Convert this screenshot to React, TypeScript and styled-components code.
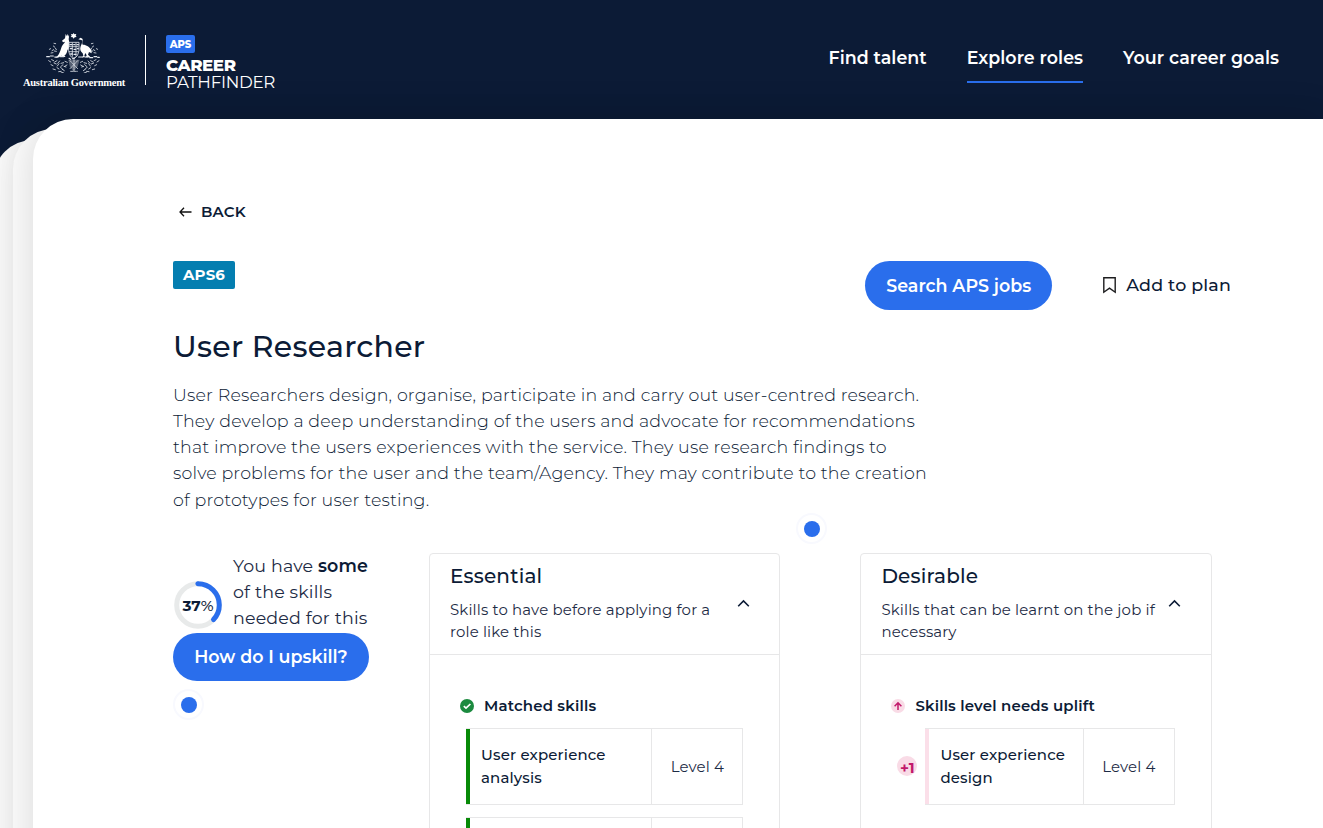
import React from "react";
import styled, { createGlobalStyle, css } from "styled-components";

const navy = "#0c1b36";
const blue = "#2a6eec";
const line = "#e7e7e8";
const body = "17.45px";
const small = "14.95px";

const GlobalStyle = createGlobalStyle`
  * { box-sizing: border-box; }
  html, body { margin: 0; height: 828px; overflow: hidden; background: ${navy}; }
  body { font-family: Montserrat, Inter, sans-serif; color: ${navy}; }
  h1, h2, p { margin: 0; }
  button { font-family: inherit; border: 0; padding: 0; background: none; color: inherit; }
`;

const Page = styled.div`
  width: 1323px;
  height: 828px;
  overflow: hidden;
  display: flex;
  flex-direction: column;
`;

const Header = styled.header`
  height: 119px;
  flex: none;
  display: flex;
  justify-content: space-between;
  padding: 0 44px 0 23px;
`;

const Brand = styled.div`
  display: flex;
  padding-top: 33px;
`;

const Government = styled.div`
  width: 102px;
  display: flex;
  flex-direction: column;
  align-items: center;
  svg { display: block; margin-right: 1px; }
`;

const GovernmentName = styled.span`
  font: bold 10.5px/12px "Liberation Serif", serif;
  color: #fff;
  white-space: nowrap;
  margin-top: 4px;
  letter-spacing: -0.23px;
`;

const BrandDivider = styled.div`
  width: 1px;
  height: 50px;
  margin: 2px 20px 0;
  background: #fff;
`;

const Product = styled.div`
  display: flex;
  flex-direction: column;
  align-items: flex-start;
  padding-top: 2px;
  color: #fff;
`;

const ProductTag = styled.span`
  width: 29px;
  height: 18px;
  border-radius: 2px;
  background: ${blue};
  font-size: 10px;
  font-weight: 800;
  line-height: 19px;
  text-align: center;
`;

const ProductName = styled.span<{ $bold?: boolean }>`
  font-size: 16.7px;
  line-height: 17px;
  white-space: nowrap;
  ${(p) =>
    p.$bold
      ? css`font-weight: 800; margin-top: 4px; letter-spacing: -0.45px;`
      : css`font-weight: 400; letter-spacing: -0.28px;`}
`;

const Nav = styled.nav`
  display: flex;
  gap: 40px;
  padding-top: 43px;
`;

const NavLink = styled.a<{ $active?: boolean }>`
  height: 40px;
  font-size: ${body};
  font-weight: 600;
  line-height: 30px;
  white-space: nowrap;
  color: #fff;
  letter-spacing: 0.04px;
  border-bottom: 2px solid ${(p) => (p.$active ? blue : "transparent")};
`;

const Stack = styled.div`
  position: relative;
  flex: 1;
  display: flex;
  padding-left: 33px;
`;

const BackSheet = styled.div<{ $left: number; $top: number; $shade: number }>`
  position: absolute;
  left: ${(p) => p.$left}px;
  top: ${(p) => p.$top}px;
  right: 0;
  bottom: -40px;
  border-radius: 40px 0 0 0;
  background: #fcfcfc;
  box-shadow: 0 0 40px rgba(0, 0, 0, ${(p) => p.$shade});
`;

const Sheet = styled.main`
  position: relative;
  flex: 1;
  height: 760px;
  border-radius: 40px 0 0 0;
  background: #fff;
  box-shadow: 0 0 40px rgba(0, 0, 0, 0.15);
  padding: 82px 92px 0 140px;
`;

const BackLink = styled.button`
  display: flex;
  align-items: center;
  height: 22px;
  gap: 9px;
  padding-left: 6px;
  font-size: ${small};
  font-weight: 600;
  letter-spacing: 0.2px;
  svg { display: block; }
`;

const TopRow = styled.div`
  display: flex;
  justify-content: space-between;
  align-items: flex-start;
  margin-top: 38px;
`;

const LevelTag = styled.span`
  width: 62px;
  height: 28px;
  border-radius: 2px;
  background: #047eb0;
  color: #fff;
  font-size: ${small};
  font-weight: 700;
  line-height: 28px;
  text-align: center;
  letter-spacing: 0.15px;
`;

const Actions = styled.div`
  display: flex;
  gap: 50px;
`;

const Pill = styled.button<{ $width: number; $height: number }>`
  display: block;
  width: ${(p) => p.$width}px;
  height: ${(p) => p.$height}px;
  border-radius: 25px;
  background: ${blue};
  color: #fff;
  font-size: ${body};
  font-weight: 600;
  line-height: 48px;
  white-space: nowrap;
`;

const PlanButton = styled.button`
  display: flex;
  align-items: center;
  gap: 9px;
  height: 48px;
  padding-bottom: 1px;
  font-size: ${body};
  font-weight: 500;
  letter-spacing: 0.17px;
  white-space: nowrap;
`;

const Title = styled.h1`
  margin-top: 17px;
  font-size: 30px;
  font-weight: 500;
  line-height: 40px;
  letter-spacing: 0.26px;
`;

const Summary = styled.p`
  margin-top: 15px;
  font-size: ${body};
  font-weight: 300;
  line-height: 26.12px;
  letter-spacing: 0.15px;
  white-space: nowrap;
  color: #0c1b36;
`;

const TextLine = styled.span`
  display: block;
`;

const Columns = styled.section`
  display: flex;
  align-items: flex-start;
  margin-top: 40.3px;
`;

const Progress = styled.div`
  width: 196px;
  margin-right: 60px;
`;

const ProgressRow = styled.div`
  display: flex;
  gap: 10px;
  height: 80px;
`;

const Gauge = styled.div`
  position: relative;
  width: 50px;
  height: 50px;
  margin-top: 27px;
  svg { display: block; }
`;

const GaugeLabel = styled.span`
  position: absolute;
  inset: 0;
  font-size: 15.2px;
  font-weight: 500;
  line-height: 52px;
  text-align: center;
  b { font-weight: 700; }
`;

const ProgressText = styled.p`
  font-size: ${body};
  line-height: 26px;
  letter-spacing: 0.17px;
  white-space: nowrap;
  color: #1d2b45;
  b { font-weight: 600; color: ${navy}; }
`;

const Beacon = styled.span<{ $left: number; $top: number }>`
  position: absolute;
  left: ${(p) => p.$left}px;
  top: ${(p) => p.$top}px;
  width: 31px;
  height: 31px;
  border: 2px solid #f8f9fe;
  border-radius: 50%;
  display: flex;
  align-items: center;
  justify-content: center;
  &::after {
    content: "";
    width: 16px;
    height: 16px;
    border-radius: 50%;
    background: ${blue};
  }
`;

const Card = styled.article`
  width: 351.4px;
  height: 400px;
  flex: none;
  border: 1px solid ${line};
  border-radius: 4px;
  & + & { margin-left: 80px; }
`;

const CardHead = styled.header`
  display: flex;
  justify-content: space-between;
  height: 101px;
  padding: 8px 29.4px 0 20px;
  border-bottom: 1px solid ${line};
  svg { display: block; margin-top: 36px; flex: none; }
`;

const CardTitle = styled.h2`
  font-size: 20px;
  font-weight: 500;
  line-height: 28px;
  margin-bottom: 9px;
  letter-spacing: 0.2px;
`;

const CardNote = styled.p`
  font-size: ${small};
  line-height: 22.4px;
  letter-spacing: 0.16px;
  white-space: nowrap;
  color: #1d2b45;
`;

const Legend = styled.div`
  display: flex;
  align-items: center;
  gap: 10px;
  height: 20px;
  margin: 41px 0 12px 30px;
  font-size: ${small};
  font-weight: 600;
  letter-spacing: 0.18px;
  svg { display: block; }
`;

const SkillLine = styled.div`
  display: flex;
  align-items: center;
  margin: 0 36px 12px;
`;

const Uplift = styled.span`
  width: 20px;
  height: 20px;
  margin-right: 8px;
  border-radius: 50%;
  background: #f9dbe6;
  color: #c2186b;
  font-size: 15px;
  font-weight: 700;
  line-height: 23px;
  text-align: center;
`;

const Skill = styled.div<{ $tone: string }>`
  display: flex;
  flex: 1;
  height: 77px;
  border: 1px solid ${line};
  border-left: 0;
  background: linear-gradient(${(p) => p.$tone}, ${(p) => p.$tone}) left / 4px 100% no-repeat;
`;

const SkillName = styled.div`
  flex: 1;
  padding: 15px 0 0 15px;
  font-size: ${small};
  font-weight: 500;
  line-height: 23px;
  white-space: nowrap;
  letter-spacing: 0.17px;
`;

const SkillLevel = styled.div`
  width: 91px;
  border-left: 1px solid ${line};
  font-size: ${small};
  line-height: 77px;
  height: 75px;
  text-align: center;
  color: #1d2b45;
  letter-spacing: 0.15px;
`;

const Crest = () => (
  <svg width="56" height="40" viewBox="138 98 168 120" fill="#fff">
    <path d="M221 97l2 5 6-1-2 5 3 4-6 1-3 4-3-4-6-1 3-4-2-5 6 1z" />
    <path d="M197 101l4 7 2-7 4 8-1 8c2 9 4 18 1 25l-5 8c-1 8-4 13-9 16l4 4h-18l7-5c-5 2-8 8-22 8 14-7 16-20 21-34 3-7 8-10 10-15l-6 2-3-5 9-7z" />
    <path d="M235 117l7-5 6 4c0 6-3 12 0 17 9-1 21 6 26 16l1 10-8-4-3 8 8 8h-16l4-5-3-8-4 7 2 6h-9l4-5-2-7c-7-5-9-13-6-21 3-6 5-10 4-18z" />
    <path d="M205 178h34l-6 20-12 16-12-16z" opacity=".3" />
    <g fill="none" stroke="#e3e7ee" strokeWidth="2.4" strokeLinecap="round">
      <path d="M206 126h31v25q-2 17-15 25q-14-7-16-25z" strokeWidth="2.5" />
      <path d="M210 133h6m5 0h4m6 0h4M211 145h5m6 2h5m5-2h3M212 161h5m5 1h6" strokeWidth="4" />
      <path d="M208 139h28M208 154h28M217 128v42M228 128v42" strokeDasharray="5 2" />
      <path d="M140 169h8m3-2h9m4 3h10m6-1h11m16 5l5 3m6-2l5-3m13-2h12m8 0h8m5 2h9m4-3h8m3 2h5" strokeWidth="3.4" />
      <path d="M148 147l4-2m4 6l5-3m-1-11l4 3m-2-11l5 1m-1 13l3 5m-16 10l6-1m4-5l6 1M293 147l-4-2m-4 6l-5-3m1-11l-4 3m2-11l-5 1m1 13l-3 5m16 10l-6-1m-4-5l-6 1" />
      <path d="M146 181l6 4m3-7l6 3m3 4l7-4m2 8l6-7m4 7l8-2m4-4l7 3m-49 7l6 3m3-8l7 3m3 6l5-7m5 9l7-6m5 5l7-4m-42 12l7 2m5-6l6 4m5-5l6 6m4-9l6 2m-22 14l7-1m4-6l6 4m-10 4l8 3" />
      <path d="M297 181l-6 4m-3-7l-6 3m-3 4l-7-4m-2 8l-6-7m-4 7l-8-2m-4-4l-7 3m49 7l-6 3m-3-8l-7 3m-3 6l-5-7m-5 9l-7-6m-5 5l-7-4m42 12l-7 2m-5-6l-6 4m-5-5l-6 6m-4-9l-6 2m22 14l-7-1m-4-6l-6 4m10 4l-8 3" />
      <path d="M210 181l23 24m0-24l-23 24M222 178v32M212 213h20" strokeDasharray="6 3" />
    </g>
  </svg>
);

const ArrowLeft = () => (
  <svg width="13" height="10" viewBox="0 0 13 10" fill="none" stroke="#111" strokeWidth="1.3">
    <path d="M5 .8L1 5l4 4.2M1.2 5h11.3" />
  </svg>
);

const Bookmark = () => (
  <svg width="15" height="18" viewBox="0 0 15 18" fill="none" stroke="#1d1d1f" strokeWidth="1.4">
    <path d="M1.8 1.7h11.4v14.5l-5.7-4-5.7 4z" />
  </svg>
);

const ChevronUp = () => (
  <svg width="13" height="12" viewBox="0 0 13 12" fill="none" stroke={navy} strokeWidth="1.6">
    <path d="M1.2 8.3L6.5 3l5.3 5.3" />
  </svg>
);

const CheckBadge = () => (
  <svg width="14" height="14" viewBox="0 0 14 14">
    <circle cx="7" cy="7" r="7" fill="#1b8a3f" />
    <path d="M3.8 7.2l2.2 2L10.4 5" fill="none" stroke="#fff" strokeWidth="1.7" />
  </svg>
);

const UpBadge = () => (
  <svg width="14" height="14" viewBox="0 0 14 14">
    <circle cx="7" cy="7" r="7" fill="#f9dbe6" />
    <path d="M7 11V3.8M3.6 7.2L7 3.8l3.4 3.4" fill="none" stroke="#c2186b" strokeWidth="1.5" />
  </svg>
);

const Ring = () => (
  <svg width="50" height="50" viewBox="0 0 50 50" fill="none" strokeWidth="5">
    <circle cx="25" cy="25" r="21.3" stroke="#e8eaea" />
    <circle
      cx="25"
      cy="25"
      r="21.3"
      stroke={blue}
      strokeLinecap="round"
      pathLength="100"
      strokeDasharray="37 63"
      transform="rotate(-90 25 25)"
    />
  </svg>
);

const summary = [
  "User Researchers design, organise, participate in and carry out user-centred research.",
  "They develop a deep understanding of the users and advocate for recommendations",
  "that improve the users experiences with the service. They use research findings to",
  "solve problems for the user and the team/Agency. They may contribute to the creation",
  "of prototypes for user testing.",
];

export default function App() {
  return (
    <Page>
      <GlobalStyle />
      <Header>
        <Brand>
          <Government>
            <Crest />
            <GovernmentName>Australian Government</GovernmentName>
          </Government>
          <BrandDivider />
          <Product>
            <ProductTag>APS</ProductTag>
            <ProductName $bold>CAREER</ProductName>
            <ProductName>PATHFINDER</ProductName>
          </Product>
        </Brand>
        <Nav>
          <NavLink>Find talent</NavLink>
          <NavLink $active>Explore roles</NavLink>
          <NavLink>Your career goals</NavLink>
        </Nav>
      </Header>
      <Stack>
        <BackSheet $left={-7} $top={21} $shade={0} />
        <BackSheet $left={13} $top={10} $shade={0.1} />
        <Sheet>
          <BackLink>
            <ArrowLeft />
            BACK
          </BackLink>
          <TopRow>
            <LevelTag>APS6</LevelTag>
            <Actions>
              <Pill $width={187} $height={49}>Search APS jobs</Pill>
              <PlanButton>
                <Bookmark />
                Add to plan
              </PlanButton>
            </Actions>
          </TopRow>
          <Title>User Researcher</Title>
          <Summary>
            {summary.map((text) => (
              <TextLine key={text}>{text}</TextLine>
            ))}
          </Summary>
          <Columns>
            <Progress>
              <ProgressRow>
                <Gauge>
                  <Ring />
                  <GaugeLabel><b>37</b>%</GaugeLabel>
                </Gauge>
                <ProgressText>
                  <TextLine>You have <b>some</b></TextLine>
                  <TextLine>of the skills</TextLine>
                  <TextLine>needed for this</TextLine>
                </ProgressText>
              </ProgressRow>
              <Pill $width={196} $height={48}>How do I upskill?</Pill>
            </Progress>
            <Card>
              <CardHead>
                <div>
                  <CardTitle>Essential</CardTitle>
                  <CardNote>
                    <TextLine>Skills to have before applying for a</TextLine>
                    <TextLine>role like this</TextLine>
                  </CardNote>
                </div>
                <ChevronUp />
              </CardHead>
              <Legend>
                <CheckBadge />
                Matched skills
              </Legend>
              <SkillLine>
                <Skill $tone="#078a07">
                  <SkillName>User experience<br />analysis</SkillName>
                  <SkillLevel>Level 4</SkillLevel>
                </Skill>
              </SkillLine>
              <SkillLine>
                <Skill $tone="#078a07">
                  <SkillName />
                  <SkillLevel />
                </Skill>
              </SkillLine>
            </Card>
            <Card>
              <CardHead>
                <div>
                  <CardTitle>Desirable</CardTitle>
                  <CardNote>
                    <TextLine>Skills that can be learnt on the job if</TextLine>
                    <TextLine>necessary</TextLine>
                  </CardNote>
                </div>
                <ChevronUp />
              </CardHead>
              <Legend>
                <UpBadge />
                Skills level needs uplift
              </Legend>
              <SkillLine>
                <Uplift>+1</Uplift>
                <Skill $tone="#fbdfe9">
                  <SkillName>User experience<br />design</SkillName>
                  <SkillLevel>Level 4</SkillLevel>
                </Skill>
              </SkillLine>
            </Card>
          </Columns>
          <Beacon $left={763} $top={394} />
          <Beacon $left={140} $top={570} />
        </Sheet>
      </Stack>
    </Page>
  );
}
